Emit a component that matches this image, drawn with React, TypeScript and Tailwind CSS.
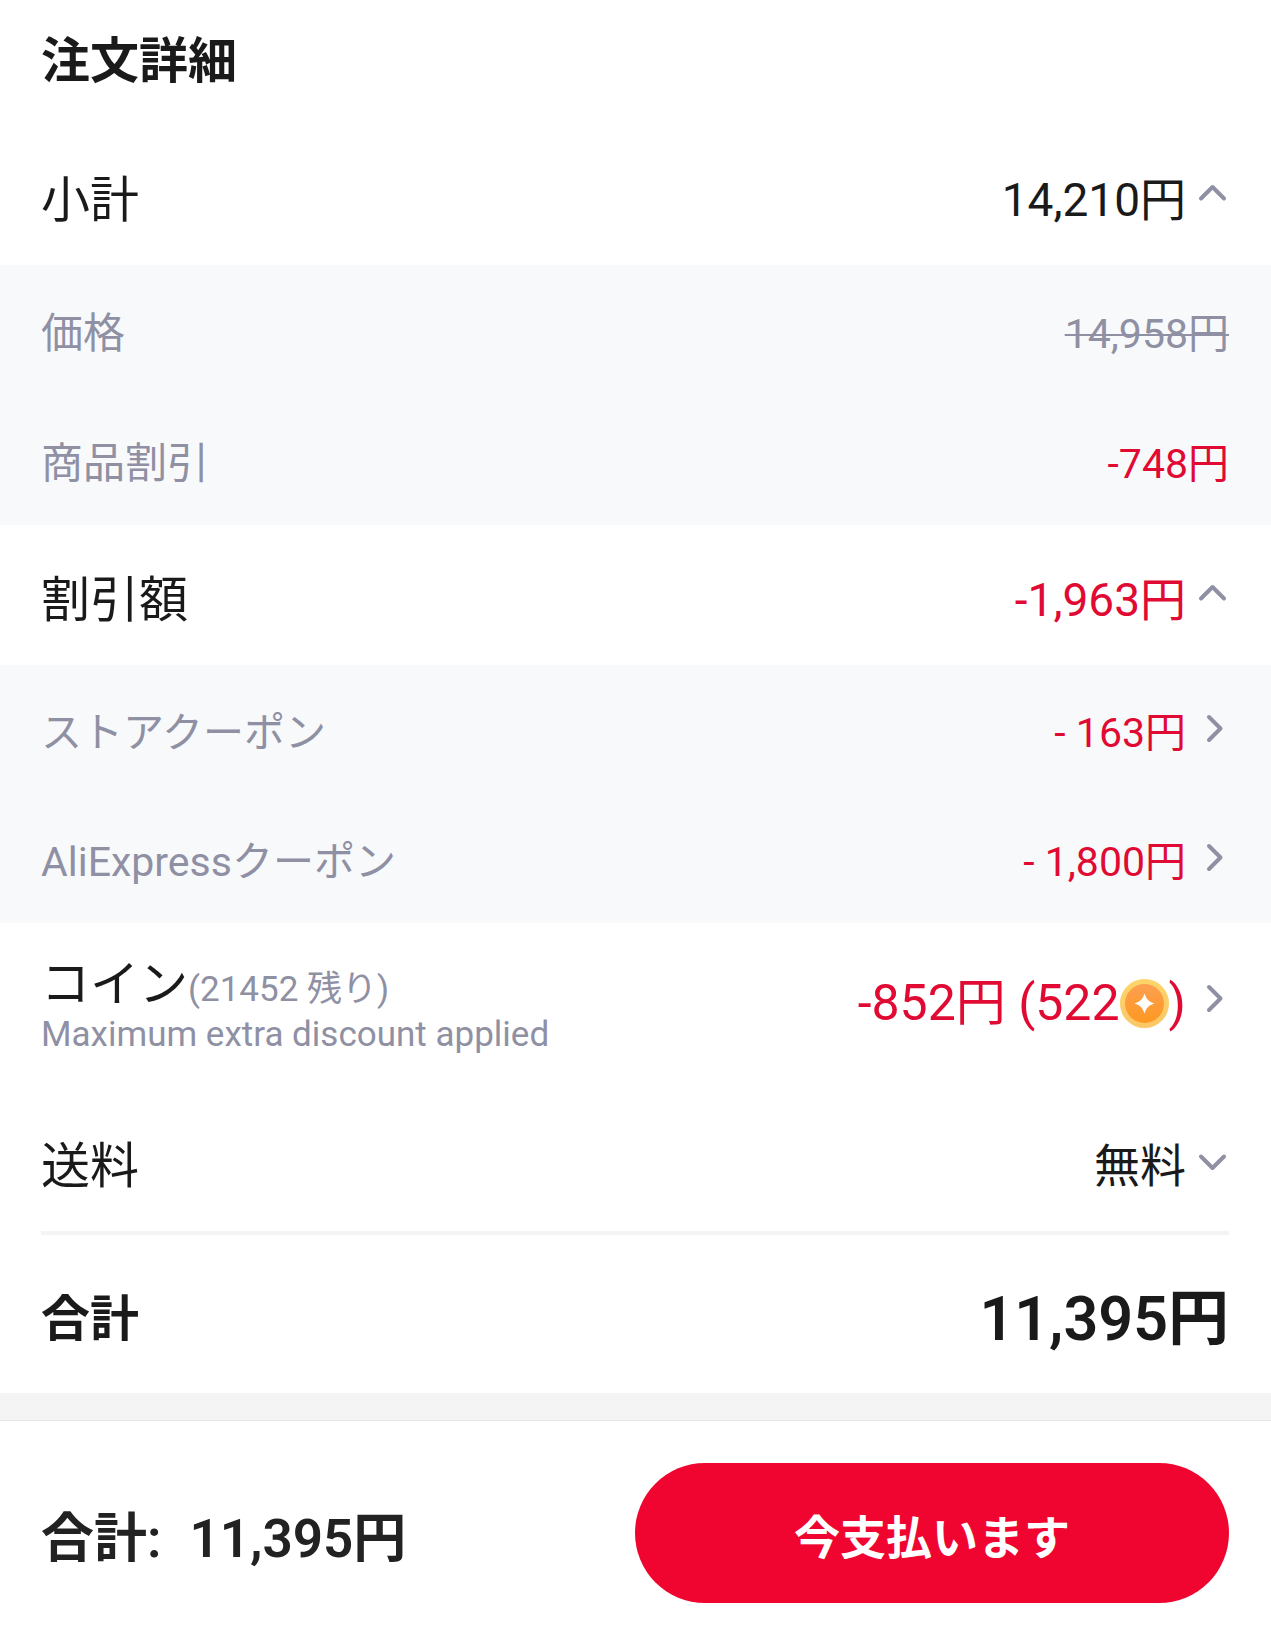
import { useState, type ReactNode } from 'react'

type Direction = 'up' | 'down' | 'right'

const chevronPaths: Record<Direction, string> = {
  up: 'M15 19.5 26.5 8 38 19.5',
  down: 'M15 11.5 26.5 23 38 11.5',
  right: 'M23 5 34.5 16.5 23 28',
}

function Chevron({ direction }: { direction: Direction }) {
  return (
    <svg
      className="h-[43px] w-[43px] shrink-0 text-[#8f90a3]"
      viewBox="0 0 43 43"
      fill="none"
      stroke="currentColor"
      strokeWidth={4}
      strokeLinecap="round"
      strokeLinejoin="round"
      aria-hidden="true"
    >
      <path d={chevronPaths[direction]} />
    </svg>
  )
}

function CoinIcon() {
  return (
    <svg className="h-[49px] w-[49px] shrink-0" viewBox="0 0 49 49" aria-hidden="true">
      <defs>
        <linearGradient id="coin-rim" x1="0" y1="0" x2="0" y2="1">
          <stop offset="0" stopColor="#fdd567" />
          <stop offset="1" stopColor="#fbc767" />
        </linearGradient>
        <linearGradient id="coin-face" x1="0" y1="0" x2="0" y2="1">
          <stop offset="0" stopColor="#fd9f52" />
          <stop offset="1" stopColor="#fe9820" />
        </linearGradient>
      </defs>
      <circle cx="24.5" cy="24.5" r="24.5" fill="url(#coin-rim)" />
      <circle cx="24.5" cy="24.5" r="19.5" fill="url(#coin-face)" />
      <path
        d="M24.5 14.5C26.5 20.5 28.5 22.5 34.5 24.5 28.5 26.5 26.5 28.5 24.5 34.5 22.5 28.5 20.5 26.5 14.5 24.5 20.5 22.5 22.5 20.5 24.5 14.5Z"
        fill="#fff"
      />
    </svg>
  )
}

// Top level line: large label, large value and a toggle
function MainRow({
  label,
  value,
  open,
  onToggle,
  red = false,
}: {
  label: string
  value: string
  open: boolean
  onToggle: () => void
  red?: boolean
}) {
  return (
    <button
      type="button"
      aria-expanded={open}
      onClick={onToggle}
      className="flex h-[140px] w-full items-center justify-between pt-[10px] pr-[42px] pl-[41px]"
    >
      <span className="text-[49px]">{label}</span>
      <span className={`flex items-center text-[46px] ${red ? 'text-[#e00a33]' : ''}`}>
        {value}
        <Chevron direction={open ? 'up' : 'down'} />
      </span>
    </button>
  )
}

function DetailRow({ label, children }: { label: string; children: ReactNode }) {
  return (
    <div className="flex items-center justify-between pt-2 pr-[42px] pl-[41px]">
      <span className="text-[#8f90a3]">{label}</span>
      <span className="text-[41px]">{children}</span>
    </div>
  )
}

export default function App() {
  const [subtotalOpen, setSubtotalOpen] = useState(true)
  const [discountOpen, setDiscountOpen] = useState(true)
  const [shippingOpen, setShippingOpen] = useState(false)

  return (
    <div
      lang="ja"
      className="min-h-screen bg-white font-[Roboto,'Noto_Sans_CJK_JP',sans-serif] leading-none text-[#1a1a1a]"
    >
      <main>
        {/* Order details */}
        <h1 className="flex h-[125px] items-center pb-[2px] pl-[41px] text-[49px] font-bold">注文詳細</h1>

        <MainRow
          label="小計"
          value="14,210円"
          open={subtotalOpen}
          onToggle={() => setSubtotalOpen(!subtotalOpen)}
        />
        {subtotalOpen && (
          <section className="grid auto-rows-[130px] bg-[#f8f9fb] text-[42px]">
            <DetailRow label="価格">
              <s className="text-[#8f90a3] decoration-2">14,958円</s>
            </DetailRow>
            <DetailRow label="商品割引">
              <span className="text-[#e00a33]">-748円</span>
            </DetailRow>
          </section>
        )}

        <MainRow
          label="割引額"
          value="-1,963円"
          open={discountOpen}
          onToggle={() => setDiscountOpen(!discountOpen)}
          red
        />
        {discountOpen && (
          <section className="grid auto-rows-[129px] bg-[#f8f9fb] text-[41px]">
            <DetailRow label="ストアクーポン">
              <a href="#store-coupon" className="flex items-center text-[#e00a33]">
                - 163円
                <Chevron direction="right" />
              </a>
            </DetailRow>
            <DetailRow label="AliExpressクーポン">
              <a href="#aliexpress-coupon" className="flex items-center text-[#e00a33]">
                - 1,800円
                <Chevron direction="right" />
              </a>
            </DetailRow>
          </section>
        )}

        {/* Coins */}
        <div className="flex h-[168px] items-center justify-between pr-[42px] pb-2 pl-[41px]">
          <div className="pt-[6px] text-[35px] text-[#8f90a3]">
            <p>
              <span className="text-[49px] text-[#1a1a1a]">コイン</span>(21452 残り)
            </p>
            <p className="mt-2">Maximum extra discount applied</p>
          </div>
          <a href="#coins" className="flex items-center text-[50px] text-[#e00a33]">
            <span>-852円 (522</span>
            <CoinIcon />
            <span>)</span>
            <Chevron direction="right" />
          </a>
        </div>

        {/* Shipping */}
        <MainRow
          label="送料"
          value="無料"
          open={shippingOpen}
          onToggle={() => setShippingOpen(!shippingOpen)}
        />
        <hr className="mr-[42px] ml-[41px] border-t-4 border-[#f4f4f4]" />

        <div className="flex h-[158px] items-center justify-between pt-[10px] pr-[42px] pl-[41px] font-semibold">
          <span className="text-[49px]">合計</span>
          <span className="text-[61px]">11,395円</span>
        </div>
      </main>

      {/* Checkout bar */}
      <footer className="border-t-[27px] border-[#f4f4f4]">
        <div className="flex items-center border-t border-[#e6e6e6] pt-[42px] pr-[42px] pb-[38px] pl-[41px]">
          <p className="flex flex-1 gap-7 pt-3 text-[53px] font-semibold text-[#222]">
            <span>合計:</span>
            <span>11,395円</span>
          </p>
          <button
            type="button"
            className="h-[140px] w-1/2 rounded-full bg-[#f00530] pt-[10px] text-[46px] font-bold text-white"
          >
            今支払います
          </button>
        </div>
      </footer>
    </div>
  )
}
